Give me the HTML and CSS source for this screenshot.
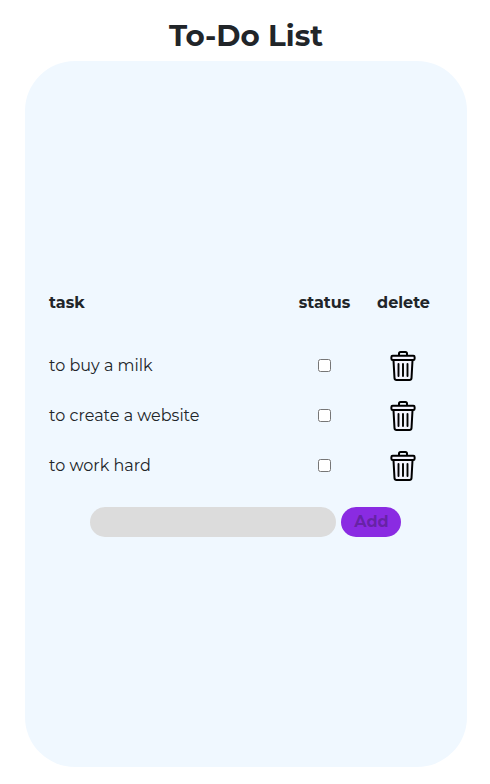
FILE: index.html
```html
<!DOCTYPE html>
<html lang="en">
<head>
<meta charset="utf-8">
<title>To-Do List</title>
<link rel="stylesheet" href="styles.css">
</head>
<body>
<svg width="0" height="0" class="defs" aria-hidden="true">
  <symbol id="trash" viewBox="0 0 26 30">
    <path d="M3.500 10 4.600 27.200Q4.800 29 6.500 29h13q1.700 0 1.900-1.800L22.500 10Z" fill="#f4f4ff"/>
    <path d="M3.500 9.500 4.500 27.100Q4.700 29 6.500 29h13q1.800 0 2-1.900L22.500 9.500M9 4.500V2.600Q9 1 10.600 1h4.800q1.600 0 1.600 1.600v1.900" fill="none" stroke="#000" stroke-width="2"/>
    <path d="M8.500 13v12M13 13v12M17.500 13v12" fill="none" stroke="#000" stroke-width="1.900" stroke-linecap="round"/>
    <rect x="1.400" y="4.800" width="23.200" height="4.200" rx="1.200" fill="#f4f4ff" stroke="#000" stroke-width="2"/>
  </symbol>
</svg>
<h1 class="title">To-Do List</h1>
<main class="card">
  <div class="row head">
    <span>task</span><span>status</span><span>delete</span>
  </div>
  <div class="row">
    <span>to buy a milk</span><input type="checkbox" class="check"><svg class="trash"><use href="#trash"/></svg>
  </div>
  <div class="row">
    <span>to create a website</span><input type="checkbox" class="check"><svg class="trash"><use href="#trash"/></svg>
  </div>
  <div class="row">
    <span>to work hard</span><input type="checkbox" class="check"><svg class="trash"><use href="#trash"/></svg>
  </div>
  <form class="form">
    <input type="text" class="field"><button type="button" class="add" disabled>Add</button>
  </form>
</main>
</body>
</html>
```
FILE: styles.css
```css
* { box-sizing: border-box; }
body {
  margin: 0;
  background: #fff;
  color: #212529;
  font: 400 16px/24px Montserrat, Inter, sans-serif;
}
.defs { display: none; }
.title {
  margin: 0 0 0 2px;
  height: 61px;
  padding-top: 18px;
  font-size: 29.35px;
  line-height: 36px;
  font-weight: 700;
  text-align: center;
}
.card {
  width: 442px;
  height: 706px;
  margin-left: 25px;
  padding: 217px 24px 0;
  background: #f0f8ff;
  border-radius: 50px;
}
.row {
  display: grid;
  grid-template-columns: 236px 78px 80px;
  align-items: center;
  justify-items: center;
  height: 50px;
  white-space: nowrap;
}
.head { font-weight: 700; margin-bottom: 13px; }
.head > span { padding-left: 1px; }
.row > :first-child { justify-self: start; padding-left: .1px; }
.check { width: 13px; height: 13px; margin: 0 0 1px; }
.trash { width: 26px; height: 30px; }
.form { display: flex; gap: 5px; margin: 16px 0 0 41px; }
.field {
  width: 246px;
  height: 30px;
  border: 0;
  border-radius: 15px;
  background: #dcdcdc;
}
.add {
  width: 60px;
  height: 30px;
  padding: 0 0 0 1px;
  border: 0;
  border-radius: 15px;
  background: #8a2be2;
  color: rgba(16, 16, 16, .3);
  font: 700 16px/24px Montserrat, Inter, sans-serif;
}
```
